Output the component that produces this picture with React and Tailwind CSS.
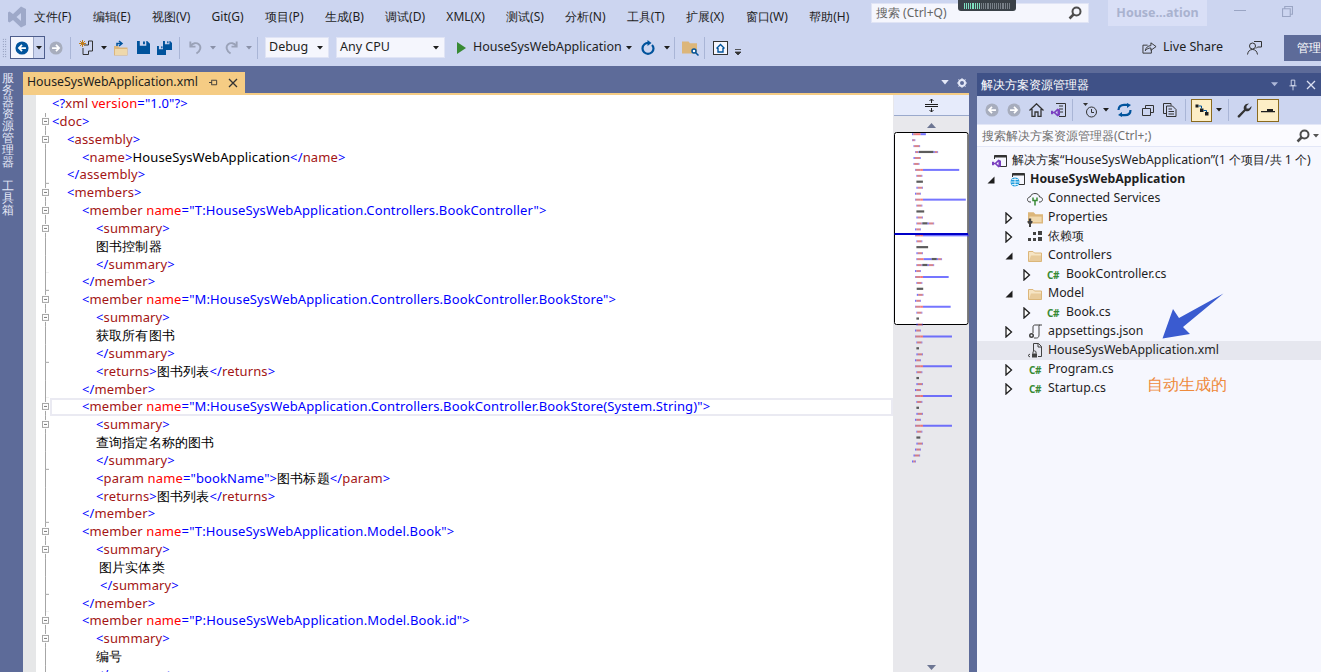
import React from 'react';

// xml token helpers, every line is a list of [kind, text]
const colors = {
  b: 'text-[#0000ff]',
  t: 'text-[#a31515]',
  a: 'text-[#ff0000]',
  k: 'text-black',
};

const open = (name, attr, val) =>
  attr
    ? [['b', '<'], ['t', name + ' '], ['a', attr], ['b', '="' + val + '">']]
    : [['b', '<'], ['t', name], ['b', '>']];
const close = (name) => [['b', '</'], ['t', name], ['b', '>']];
const txt = (s) => [['k', s]];

const pad = ['pl-0', 'pl-[15px]', 'pl-[30px]', 'pl-[44px]', 'pl-[47px]', 'pl-[48px]'];

const C = 'HouseSysWebApplication.Controllers.BookController';
const M = 'HouseSysWebApplication.Model.Book';

const lines = [
  { i: 0, f: null, p: [['b', '<?'], ['t', 'xml '], ['a', 'version'], ['b', '="1.0"?>']] },
  { i: 0, f: 'box', p: open('doc') },
  { i: 1, f: 'box', p: open('assembly') },
  { i: 2, f: 'line', p: [...open('name'), ...txt('HouseSysWebApplication'), ...close('name')] },
  { i: 1, f: 'end', p: close('assembly') },
  { i: 1, f: 'box', p: open('members') },
  { i: 2, f: 'box', p: open('member', 'name', 'T:' + C) },
  { i: 3, f: 'box', p: open('summary') },
  { i: 3, f: 'line', p: txt('图书控制器') },
  { i: 3, f: 'end', p: close('summary') },
  { i: 2, f: 'end', p: close('member') },
  { i: 2, f: 'box', p: open('member', 'name', 'M:' + C + '.BookStore') },
  { i: 3, f: 'box', p: open('summary') },
  { i: 3, f: 'line', p: txt('获取所有图书') },
  { i: 3, f: 'end', p: close('summary') },
  { i: 3, f: 'line', p: [...open('returns'), ...txt('图书列表'), ...close('returns')] },
  { i: 2, f: 'end', p: close('member') },
  { i: 2, f: 'box', hl: true, p: open('member', 'name', 'M:' + C + '.BookStore(System.String)') },
  { i: 3, f: 'box', p: open('summary') },
  { i: 3, f: 'line', p: txt('查询指定名称的图书') },
  { i: 3, f: 'end', p: close('summary') },
  { i: 3, f: 'line', p: [...open('param', 'name', 'bookName'), ...txt('图书标题'), ...close('param')] },
  { i: 3, f: 'line', p: [...open('returns'), ...txt('图书列表'), ...close('returns')] },
  { i: 2, f: 'end', p: close('member') },
  { i: 2, f: 'box', p: open('member', 'name', 'T:' + M) },
  { i: 3, f: 'box', p: open('summary') },
  { i: 4, f: 'line', p: txt('图片实体类') },
  { i: 5, f: 'end', p: close('summary') },
  { i: 2, f: 'end', p: close('member') },
  { i: 2, f: 'box', p: open('member', 'name', 'P:' + M + '.id') },
  { i: 3, f: 'box', p: open('summary') },
  { i: 3, f: 'line', p: txt('编号') },
  { i: 3, f: 'end', p: close('summary') },
];

// only the code map needs the rows below the fold
const prop = (tail, t) => [
  { i: 2, p: open('member', 'name', 'P:' + M + '.' + tail) },
  { i: 3, p: open('summary') },
  { i: 3, p: txt(t) },
  { i: 3, p: close('summary') },
  { i: 2, p: close('member') },
];
const mapLines = [
  ...lines,
  { i: 2, p: close('member') },
  ...prop('aaaa', '一二'),
  ...prop('bbbb', '一二'),
  ...prop('cccc', '一二'),
  ...prop('dddd', '一二三'),
  { i: 1, p: close('members') },
  { i: 0, p: close('doc') },
];

const mapFill = { b: '#3a3aff', t: '#c4505c', a: '#f04040', k: '#333333' };
const indentPx = [0, 15, 30, 44, 47, 48];

function CodeMap() {
  return (
    <svg viewBox="0 0 75 556" className="w-full flex-1 min-h-0" preserveAspectRatio="xMinYMin slice">
      <path d="M33 12 L37.5 7 L42 12 Z" fill="#6d7693" />
      <path d="M33 549 L37.5 554 L42 549 Z" fill="#6d7693" />
      <rect x="0.5" y="16.5" width="73.5" height="192" rx="2" fill="#fff" stroke="#000" />
      <g className="blur-[0.5px]">
        {mapLines.map((l, n) => {
          let x = 18 + indentPx[l.i] * 0.1;
          const y = 17.2 + n * 5.95;
          return l.p.map(([k, s], j) => {
            const cjk = k === 'k' && /[^\x00-\x7f]/.test(s);
            const w = s.length * (cjk ? 1.3 : 0.66);
            const r = <rect key={n + '-' + j} x={x} y={y - (k === 'k' ? 0.2 : 0)} width={w} height={k === 'k' ? 2.2 : 2} fill={mapFill[k]} opacity={k === 'k' ? 0.8 : 0.7} />;
            x += w;
            return r;
          });
        })}
      </g>
      <rect x="0.5" y="117" width="73.5" height="2" fill="#0000c8" />
    </svg>
  );
}

function Fold({ kind }) {
  if (!kind) return <div className="w-[16px] shrink-0" />;
  return (
    <svg viewBox="0 0 16 18" preserveAspectRatio="none" className="w-[16px] h-full shrink-0">
      {kind === 'box' ? (
        <>
          <path d="M9.5 0V4M9.5 13V18" stroke="#a5a5a5" fill="none" />
          <rect x="6.5" y="5.5" width="6" height="6" fill="#fff" stroke="#a5a5a5" />
          <path d="M8 8.5H11" stroke="#777" />
        </>
      ) : kind === 'end' ? (
        <path d="M9.5 0V18M9.5 17.5H13" stroke="#a5a5a5" fill="none" />
      ) : (
        <path d="M9.5 0V18" stroke="#a5a5a5" fill="none" />
      )}
    </svg>
  );
}

function CodeLine({ line }) {
  return (
    <div className={'flex h-[17.85px] items-center ' + (line.hl ? 'relative' : '')}>
      <Fold kind={line.f} />
      {line.hl && <div className="absolute left-[14px] right-0 top-0 bottom-0 border-2 border-[#eaeaf2]" />}
      <div className={'whitespace-pre text-[13px] tracking-[0.13px] leading-[17.85px] ' + pad[line.i]}>
        {line.p.map(([k, s], j) => (
          <span key={j} className={colors[k]}>{s}</span>
        ))}
      </div>
    </div>
  );
}

const Caret = ({ c = '#1e1e1e', className = '' }) => (
  <svg viewBox="0 0 6 4" className={'w-[6px] h-[4px] shrink-0 ' + className}><path d="M0 0H6L3 3.5Z" fill={c} /></svg>
);
const Sep = ({ className = '' }) => <div className={'w-[1px] h-[22px] bg-[#a9b5d6] shrink-0 ' + className} />;
const Slot = ({ className = '', children }) => (
  <div className={'flex items-center justify-center shrink-0 ' + className}>{children}</div>
);

const RoundArrow = ({ fill, dir = 'left', className = 'w-[14px] h-[14px]' }) => (
  <svg viewBox="0 0 16 16" className={className}>
    <circle cx="8" cy="8" r="7.5" fill={fill} />
    <path d={dir === 'left' ? 'M12.5 8H5M8 4.5L4.5 8L8 11.5' : 'M3.5 8H11M8 4.5L11.5 8L8 11.5'} stroke="#fff" strokeWidth="2" fill="none" />
  </svg>
);
const Save = ({ className = 'w-[13px] h-[13px]' }) => (
  <svg viewBox="0 0 14 14" className={className}>
    <path d="M0 0H3V5H10V0H11L14 3V14H0Z" fill="#00539c" />
    <rect x="6.5" y="0.5" width="2" height="3" fill="#00539c" />
  </svg>
);
const Undo = ({ flip }) => (
  <svg viewBox="0 0 16 16" className={'w-[15px] h-[15px] ' + (flip ? '-scale-x-100' : '')}>
    <path d="M2.5 1.5V7H8M3 6.5C5 3 9 2.5 11.5 4.5C14.5 7 13.5 11.5 9 14.5" stroke="#9aa2b8" strokeWidth="2" fill="none" />
  </svg>
);
const Folder = ({ className = 'w-[15px] h-[13px]', fill = '#dcb67a' }) => (
  <svg viewBox="0 0 16 13" className={className}>
    <path d="M0 1H6L8 3H16V13H0Z" fill={fill} />
    <path d="M1.5 5.5H14.5V11.5H1.5Z" fill="#f0d9ae" />
  </svg>
);
const VsMark = ({ className }) => (
  <svg viewBox="0 0 16 16" className={className}>
    <path d="M11.5 1L16 3V13L11.5 15L5 9L2 11.5L0 10.5V5.500L2 4.500L5 7ZM11.5 5L8 8L11.5 11Z" fill="#7a3fc0" fillRule="evenodd" />
  </svg>
);
const Csharp = () => (
  <span className="text-[#388a34] font-bold text-[10px] leading-none tracking-[-0.5px] font-['Liberation_Sans',sans-serif]">C#</span>
);
const ArrowOpen = () => (
  <svg viewBox="0 0 8 12" className="w-[8px] h-[12px] ml-[1px]"><path d="M1 1L6.500 6L1 11Z" fill="#fff" stroke="#1e1e1e" strokeWidth="1.300" /></svg>
);
const ArrowDown = () => (
  <svg viewBox="0 0 8 8" className="w-[8px] h-[8px] ml-[1px]"><path d="M7.500 0.500V7.500H0.500Z" fill="#1e1e1e" /></svg>
);

const FolderOpen = () => (
  <svg viewBox="0 0 14 12" className="w-[14px] h-[12px]">
    <path d="M0.500 1.500H5L6.500 3H13.500V11.500H0.500Z" fill="#f6e4c3" stroke="#dcb67a" />
    <path d="M1 11L3 5.500H13.500V11.500H1Z" fill="#dcb67a" opacity="0.55" />
  </svg>
);

const treeRows = [
  { d: 0, icon: 'sol', label: '解决方案“HouseSysWebApplication”(1 个项目/共 1 个)' },
  { d: 1, a: 'down', icon: 'web', label: 'HouseSysWebApplication', bold: true },
  { d: 2, icon: 'cloud', label: 'Connected Services' },
  { d: 2, a: 'open', icon: 'props', label: 'Properties' },
  { d: 2, a: 'open', icon: 'deps', label: '依赖项' },
  { d: 2, a: 'down', icon: 'folder', label: 'Controllers' },
  { d: 3, a: 'open', icon: 'cs', label: 'BookController.cs' },
  { d: 2, a: 'down', icon: 'folder', label: 'Model' },
  { d: 3, a: 'open', icon: 'cs', label: 'Book.cs' },
  { d: 2, a: 'open', icon: 'json', label: 'appsettings.json' },
  { d: 2, icon: 'xml', label: 'HouseSysWebApplication.xml', sel: true },
  { d: 2, a: 'open', icon: 'cs', label: 'Program.cs' },
  { d: 2, a: 'open', icon: 'cs', label: 'Startup.cs' },
];

const treePad = { 0: 'pl-[9px]', 1: 'pl-[9px]', 2: 'pl-[27px]', 3: 'pl-[45px]' };

function TreeIcon({ name }) {
  switch (name) {
    case 'sol':
      return (
        <div className="relative w-[15px] h-[14px]">
          <svg viewBox="0 0 15 14" className="w-[15px] h-[14px]">
            <path d="M2.500 5V1.500H14.500V12.500H7" stroke="#333" fill="none" />
            <path d="M2.500 1.500H14.500V3.500H2.500Z" fill="#333" />
          </svg>
          <VsMark className="absolute left-0 bottom-0 w-[9px] h-[9px]" />
        </div>
      );
    case 'web':
      return (
        <svg viewBox="0 0 15 15" className="w-[15px] h-[15px]">
          <path d="M2.500 5V1.500H14.500V12.500H9" stroke="#333" fill="none" />
          <path d="M2.500 1.500H14.500V3.500H2.500Z" fill="#333" />
          <circle cx="5" cy="10" r="4.500" fill="#1f9ee0" />
          <path d="M0.500 10H9.500M5 5.500V14.500M2 7.500H8M2 12.500H8" stroke="#fff" strokeWidth="0.800" fill="none" />
        </svg>
      );
    case 'cloud':
      return (
        <svg viewBox="0 0 16 14" className="w-[16px] h-[14px]">
          <path d="M4 10H3C1 10 0.500 8.500 0.500 7.500C0.500 6 2 5 3 5C4 2.500 6 1.500 8 1.500C11 1.500 12.500 3.500 12.500 5C14.500 5 15.500 6.500 15.500 7.500C15.500 9 14 10 13 10H12" stroke="#424242" fill="none" />
          <path d="M6 5.500V8.500H10V5.500M8 8.500V13.500" stroke="#388a34" strokeWidth="1.500" fill="none" />
        </svg>
      );
    case 'props':
      return (
        <div className="relative w-[15px] h-[13px]">
          <Folder className="w-[15px] h-[13px]" />
          <svg viewBox="0 0 6 9" className="absolute left-[-1px] bottom-[-3px] w-[6px] h-[9px]">
            <path d="M0.500 0.500V3H1.800V0.500H4.200V3H5.500V0.500V4.500L4 6V9H2V6L0.500 4.500Z" fill="#424242" />
          </svg>
        </div>
      );
    case 'deps':
      return (
        <svg viewBox="0 0 14 11" className="w-[14px] h-[11px]">
          <path d="M0 7H3V10H0ZM5 7H8V10H5ZM5 1H8V4H5Z" fill="#424242" />
          <path d="M10 0H14V4H10Z" fill="#424242" />
          <path d="M10 6H14V10H10Z" fill="#424242" />
        </svg>
      );
    case 'folder':
      return <FolderOpen />;
    case 'cs':
      return <Csharp />;
    case 'json':
      return (
        <svg viewBox="0 0 15 15" className="w-[15px] h-[15px]">
          <path d="M5 9V3C5 1.500 6 1 7 1H14M12 1C10.500 1 11 3 11 4V11C11 13 10 14 8.500 14H6" stroke="#424242" fill="none" />
          <circle cx="3.500" cy="11.500" r="2.500" fill="#424242" />
          <circle cx="3.500" cy="11.500" r="1" fill="#f6f7fe" />
        </svg>
      );
    case 'xml':
      return (
        <svg viewBox="0 0 16 15" className="w-[16px] h-[15px]">
          <path d="M6.500 8V0.500H11.500L14.500 3.500V13.500H11" stroke="#424242" fill="none" />
          <path d="M11 0.500V4H14.500" stroke="#424242" fill="none" />
          <rect x="5" y="10.500" width="5" height="4" fill="#424242" />
          <path d="M6 10.500V9C6 7.500 9 7.500 9 9V10.500" stroke="#424242" fill="none" />
          <path d="M3 11L1 12.500L3 14M12 11" stroke="#424242" fill="none" />
        </svg>
      );
    default:
      return null;
  }
}

function TreeRow({ row }) {
  return (
    <div className={'flex items-center h-[19px] whitespace-nowrap ' + treePad[row.d] + (row.sel ? ' bg-[#e6e7ef]' : '')}>
      {row.d > 0 && (
        <div className="w-[18px] flex items-center shrink-0">
          {row.a === 'down' && <ArrowDown />}
          {row.a === 'open' && <ArrowOpen />}
        </div>
      )}
      <div className="flex items-center justify-center shrink-0 w-[26px]">
        <TreeIcon name={row.icon} />
      </div>
      <span className={'text-[12.3px] text-[#1e1e1e] ' + (row.bold ? 'font-bold' : '')}>{row.label}</span>
    </div>
  );
}

const menus = ['文件(F)', '编辑(E)', '视图(V)', 'Git(G)', '项目(P)', '生成(B)', '调试(D)', 'XML(X)', '测试(S)', '分析(N)', '工具(T)', '扩展(X)', '窗口(W)', '帮助(H)'];

function SearchGlass({ className = 'w-[14px] h-[14px]' }) {
  return (
    <svg viewBox="0 0 14 14" className={className}>
      <circle cx="8.500" cy="5.500" r="4" stroke="#4d4d4d" strokeWidth="2" fill="none" />
      <path d="M5.500 8.500L1.500 12.500" stroke="#4d4d4d" strokeWidth="2.500" />
    </svg>
  );
}

export default function App() {
  return (
    <div className="relative h-[672px] w-[1321px] overflow-hidden flex flex-col bg-[#ccd5f0] font-['Noto_Sans','Noto_Sans_CJK_SC',sans-serif]">
      {/* title bar */}
      <div className="flex items-center h-[33px] shrink-0">
        <div className="w-[871px] flex items-center shrink-0">
          <Slot className="w-[34px]">
            <svg viewBox="0 0 18 22" className="w-[18px] h-[22px]">
              <path d="M13 0.500L18 3V19L13 21.500L5 14L1.500 16.500L0 15.500V6.500L1.500 5.500L5 8ZM13 7L8.500 11L13 15Z" fill="#9ea9c9" fillRule="evenodd" />
            </svg>
          </Slot>
          <div className="flex items-center gap-[21.3px] text-[12px] text-[#1e1e1e] whitespace-nowrap">
            {menus.map((m) => (
              <span key={m}>{m}</span>
            ))}
          </div>
        </div>
        <div className="w-[218px] h-[20px] mb-[7px] bg-[#f5f6fd] border border-[#e0e4f5] flex items-center justify-between pl-[4px] pr-[6px] text-[12px] text-[#666] shrink-0">
          <span>搜索 (Ctrl+Q)</span>
          <SearchGlass />
        </div>
        <div className="ml-[19px] mb-[7px] w-[99px] h-[26px] bg-[#d9dff6] flex items-center justify-center text-[12.500px] font-bold text-[#a9b2cf] shrink-0">House...ation</div>
        <div className="ml-[27px] mb-[12px] w-[12px] h-[1px] bg-[#9aa5c4] shrink-0" />
        <svg viewBox="0 0 10 10" className="ml-[36px] mb-[10px] w-[11px] h-[11px] shrink-0">
          <path d="M0.500 2.500H7.500V9.500H0.500ZM2.500 2.500V0.500H9.500V7.500H7.500" stroke="#9aa5c4" fill="none" />
        </svg>
      </div>

      {/* the little progress widget that hangs from the top edge */}
      <div className="absolute left-[958px] top-0 w-[58px] h-[11px] bg-[#3a4148] rounded-b-[3px] flex items-center gap-[1px] px-[6px]">
        {Array.from({ length: 25 }).map((_, n) => (
          <div key={n} className={'w-[1px] h-[6px] ' + (n < 9 ? 'bg-[#7ee0c0]' : 'bg-[#788088]')} />
        ))}
      </div>

      {/* toolbar */}
      <div className="flex items-center h-[33px] shrink-0 pl-[2px] pb-[4px]">
        <div className="w-[5px] h-[20px] shrink-0 bg-[radial-gradient(#6f7a9c_0.7px,transparent_0.8px)] bg-[length:2.500px_2.500px]" />
        <div className="ml-[3px] flex items-center w-[35px] h-[23px] border border-[#4d5d8c] shrink-0">
          <Slot className="w-[23px] h-full bg-[#f5f6fd] border-r border-[#9aa5c4]">
            <RoundArrow fill="#00539c" />
          </Slot>
          <Slot className="flex-1"><Caret /></Slot>
        </div>
        <Slot className="w-[22px]"><RoundArrow fill="#a7adbd" dir="right" /></Slot>
        <Sep className="ml-[3px]" />
        <Slot className="w-[30px]">
          <svg viewBox="0 0 14 15" className="w-[14px] h-[15px]">
            <path d="M5 5H9.500V1H13.500V11H9.500V14.500H4V8" stroke="#333" fill="none" />
            <path d="M3.500 0V7M0 3.500H7M1 1L6 6M6 1L1 6" stroke="#c27d1a" />
          </svg>
        </Slot>
        <Slot className="w-[6px]"><Caret /></Slot>
        <Slot className="w-[26px]">
          <svg viewBox="0 0 15 16" className="w-[15px] h-[16px]">
            <path d="M1 6H5L6.500 7.500H14.500V15.500H1Z" fill="#dcb67a" />
            <path d="M2 9H14V15H2Z" fill="#eed8ab" />
            <path d="M4 6V3.500H8M6 1L9 3.500L6 6" stroke="#00539c" strokeWidth="1.500" fill="none" />
          </svg>
        </Slot>
        <Slot className="w-[20px]"><Save /></Slot>
        <Slot className="w-[22px]">
          <div className="relative w-[15px] h-[14px]">
            <Save className="absolute right-0 top-0 w-[9px] h-[9px]" />
            <Save className="absolute left-0 bottom-0 w-[9px] h-[9px]" />
          </div>
        </Slot>
        <Sep className="ml-[4px]" />
        <Slot className="w-[30px]"><Undo /></Slot>
        <Slot className="w-[6px]"><Caret c="#8a91a8" /></Slot>
        <Slot className="w-[30px]"><Undo flip /></Slot>
        <Slot className="w-[6px]"><Caret c="#8a91a8" /></Slot>
        <Sep className="ml-[5px]" />
        <div className="ml-[7px] w-[64px] h-[21px] bg-[#f5f6fd] border border-[#e0e4f5] flex items-center justify-between pl-[3px] pr-[5px] text-[12.500px] text-[#1e1e1e] shrink-0">
          <span>Debug</span>
          <Caret />
        </div>
        <div className="ml-[7px] w-[109px] h-[21px] bg-[#f5f6fd] border border-[#e0e4f5] flex items-center justify-between pl-[3px] pr-[5px] text-[12.500px] text-[#1e1e1e] shrink-0">
          <span>Any CPU</span>
          <Caret />
        </div>
        <Slot className="ml-[7px] w-[18px]">
          <svg viewBox="0 0 9 12" className="w-[9px] h-[12px]"><path d="M0 0L9 6L0 12Z" fill="#388a34" /></svg>
        </Slot>
        <span className="ml-[3px] w-[148px] text-[12.500px] text-[#1e1e1e] whitespace-nowrap shrink-0">HouseSysWebApplication</span>
        <Slot className="ml-[5px] w-[6px]"><Caret /></Slot>
        <Slot className="w-[32px]">
          <svg viewBox="0 0 14 15" className="w-[14px] h-[15px]">
            <path d="M8 3C4.500 2.500 1.500 5 1.500 8.500C1.500 11.500 4 13.800 7 13.800C10 13.800 12.500 11.500 12.500 8.500C12.500 7 12 6 11 5" stroke="#00539c" strokeWidth="2.200" fill="none" />
            <path d="M6.500 0L10.500 3L6.500 6Z" fill="#00539c" />
          </svg>
        </Slot>
        <Slot className="w-[6px]"><Caret /></Slot>
        <Sep className="ml-[4px]" />
        <Slot className="w-[29px]">
          <div className="relative w-[15px] h-[13px]">
            <svg viewBox="0 0 16 13" className="w-[15px] h-[13px]"><path d="M0 0H7L8.500 2H16V13H0Z" fill="#dcb67a" /></svg>
            <svg viewBox="0 0 8 8" className="absolute right-[-2px] bottom-[-2px] w-[8px] h-[8px]">
              <circle cx="3" cy="3" r="2" stroke="#00539c" strokeWidth="1.500" fill="#fff" />
              <path d="M4.500 4.500L7.500 7.500" stroke="#00539c" strokeWidth="1.500" />
            </svg>
          </div>
        </Slot>
        <Sep />
        <Slot className="w-[30px]">
          <svg viewBox="0 0 15 14" className="w-[15px] h-[14px]">
            <rect x="0.500" y="0.500" width="14" height="13" fill="#f5f6fd" stroke="#333" />
            <path d="M3.500 7.500L7.500 3.500L11.500 7.500M5 7V11H10V7" stroke="#00539c" strokeWidth="1.400" fill="none" />
          </svg>
        </Slot>
        <svg viewBox="0 0 6 6" className="w-[6px] h-[6px] mt-[9px] shrink-0"><path d="M0 0.500H6M0 3H6L3 6Z" stroke="#333" strokeWidth="0.800" fill="#333" /></svg>
        <div className="flex-1" />
        <svg viewBox="0 0 16 15" className="w-[15px] h-[15px] shrink-0">
          <path d="M10 8V13.500H1V5H6" stroke="#333" fill="none" />
          <path d="M3.500 11C4 7.500 6.500 5.500 9.500 5.500V2.500L15 6.500L9.500 10.500V8C7 8 5 9 3.500 11Z" fill="#ccd5f0" stroke="#333" />
        </svg>
        <span className="ml-[6px] text-[12.500px] text-[#1e1e1e] whitespace-nowrap w-[60px] shrink-0">Live Share</span>
        <svg viewBox="0 0 15 15" className="ml-[24px] w-[15px] h-[15px] shrink-0">
          <circle cx="5.500" cy="6" r="3" stroke="#333" fill="none" />
          <path d="M0.500 14.500C1 11 3 9.500 5.500 9.500C8 9.500 10 11 10.500 14.500M7 1.500H14.500V7H10.500L9 8.500" stroke="#333" fill="none" />
        </svg>
        <div className="ml-[22px] w-[37px] h-[26px] bg-[#5d6b99] text-white text-[12px] flex items-center pl-[13px] whitespace-nowrap overflow-hidden shrink-0">管理员</div>
      </div>

      {/* body */}
      <div className="flex flex-1 min-h-0 bg-[#5d6b99]">
        <div className="w-[23px] shrink-0 pt-[6px] pl-[2px] flex flex-col gap-[12px] text-[12px] text-[#e4e8f7]">
          <span className="w-[12px] leading-[12px] break-all">服务器资源管理器</span>
          <span className="w-[12px] leading-[12px] break-all">工具箱</span>
        </div>

        <div className="w-[946px] shrink-0 flex flex-col min-h-0">
          <div className="flex items-end h-[27px] shrink-0">
            <div className="w-[222px] h-[21px] bg-[#f5cc84] flex items-center pl-[4px] shrink-0">
              <span className="text-[12.3px] text-[#1e1e1e] whitespace-nowrap">HouseSysWebApplication.xml</span>
              <svg viewBox="0 0 10 10" className="ml-[11px] w-[9px] h-[9px] shrink-0">
                <path d="M0 5H3M3 2V8M3.500 2.500H8.500V7.500H3.500" stroke="#333" fill="none" />
              </svg>
              <svg viewBox="0 0 10 10" className="ml-[10px] w-[10px] h-[10px] shrink-0">
                <path d="M1 1L9 9M9 1L1 9" stroke="#333" strokeWidth="1.300" />
              </svg>
            </div>
            <div className="flex-1 flex items-center justify-end h-[21px] pr-[2px] gap-[8px]">
              <Caret c="#e4e8f7" className="w-[8px] h-[5px]" />
              <svg viewBox="0 0 10 10" className="w-[10px] h-[10px]">
                <circle cx="5" cy="5" r="3" stroke="#e4e8f7" strokeWidth="2" fill="none" />
                <path d="M5 0V2M5 8V10M0 5H2M8 5H10M1.500 1.500L3 3M7 7L8.500 8.500M8.500 1.500L7 3M3 7L1.500 8.500" stroke="#e4e8f7" />
              </svg>
            </div>
          </div>
          <div className="h-[2px] bg-[#f5cc84] shrink-0" />
          <div className="flex flex-1 min-h-0">
            <div className="w-[13px] bg-[#e6e7e8] shrink-0" />
            <div className="w-[857px] bg-white shrink-0 overflow-hidden">
              {lines.map((l, n) => (
                <CodeLine key={n} line={l} />
              ))}
            </div>
            <div className="flex-1 flex flex-col min-h-0 bg-[#e8e8ec] border-l border-[#e8e8ec]">
              <div className="h-[21px] bg-[#e6ebfb] border-b border-[#9aa9cc] flex items-center justify-center shrink-0">
                <svg viewBox="0 0 13 13" className="w-[13px] h-[13px]">
                  <path d="M0 5.500H13M0 7.500H13M6.500 0V4M6.500 9V13" stroke="#1e1e1e" />
                  <path d="M4.500 2L6.500 0L8.500 2M4.500 11L6.500 13L8.500 11" stroke="#1e1e1e" fill="none" />
                </svg>
              </div>
              <CodeMap />
            </div>
          </div>
        </div>

        {/* solution explorer */}
        <div className="ml-[8px] flex-1 min-w-0 mt-[7px] flex flex-col min-h-0">
          <div className="h-[23px] bg-[#3f5187] flex items-center pl-[4px] pr-[5px] shrink-0">
            <span className="text-[12px] text-white flex-1">解决方案资源管理器</span>
            <Caret c="#aeb8d8" className="w-[7px] h-[5px] mr-[11px]" />
            <svg viewBox="0 0 9 12" className="w-[8px] h-[12px] mr-[9px]">
              <path d="M2.500 0.500H6.500V6.500H2.500ZM0.500 7H8.500M4.500 7V12" stroke="#dbe0f2" fill="none" />
            </svg>
            <svg viewBox="0 0 10 10" className="w-[10px] h-[10px]">
              <path d="M1 1L9 9M9 1L1 9" stroke="#dbe0f2" strokeWidth="1.300" />
            </svg>
          </div>
          <div className="h-[28px] bg-[#ccd5f0] flex items-center pl-[4px] shrink-0">
            <Slot className="w-[22px]"><RoundArrow fill="#a7adbd" /></Slot>
            <Slot className="w-[22px]"><RoundArrow fill="#a7adbd" dir="right" /></Slot>
            <Slot className="w-[22px]">
              <svg viewBox="0 0 15 14" className="w-[15px] h-[14px]">
                <path d="M0.500 7.500L7.500 0.800L14.500 7.500M3 6V13.500H6V9H9V13.500H12V6" stroke="#333" strokeWidth="1.300" fill="none" />
              </svg>
            </Slot>
            <Slot className="w-[22px]">
              <div className="relative w-[15px] h-[14px]">
                <svg viewBox="0 0 15 14" className="w-[15px] h-[14px]">
                  <path d="M5 0.500H14.500V13.500H8M8 3H12M8 6H12M8 9H12" stroke="#333" fill="none" />
                </svg>
                <VsMark className="absolute left-0 bottom-0 w-[9px] h-[9px]" />
              </div>
            </Slot>
            <Sep className="ml-[3px]" />
            <Slot className="w-[24px] ml-[5px]">
              <svg viewBox="0 0 15 15" className="w-[15px] h-[15px]">
                <path d="M0 0H5L2.500 3Z" fill="#333" />
                <circle cx="8.500" cy="9" r="5" stroke="#333" fill="none" />
                <path d="M8.500 6V9.500H11" stroke="#333" fill="none" />
              </svg>
            </Slot>
            <Slot className="w-[8px]"><Caret /></Slot>
            <Slot className="w-[26px] ml-[1px]">
              <svg viewBox="0 0 15 14" className="w-[15px] h-[14px]">
                <path d="M1.500 7C1.500 3.500 4 1.800 7 1.800H10.500M13.500 7C13.500 10.500 11 12.200 8 12.200H4.500" stroke="#00539c" strokeWidth="2.200" fill="none" />
                <path d="M10 0L14 2L10 5ZM5 9L1 12L5 14Z" fill="#00539c" />
              </svg>
            </Slot>
            <Slot className="w-[22px]">
              <svg viewBox="0 0 12 12" className="w-[12px] h-[12px]">
                <path d="M0.500 4.500H8.500V11.500H0.500ZM3.500 4V1.500H11.500V8.500H9" stroke="#333" fill="none" />
              </svg>
            </Slot>
            <Slot className="w-[22px]">
              <svg viewBox="0 0 14 14" className="w-[14px] h-[14px]">
                <path d="M3 10.500H0.500V0.500H8V2.500M3.500 3H9.500L13 6.500V13.500H3.500ZM5.500 6H9M5.500 8.500H11M5.500 11H11" stroke="#333" fill="none" />
              </svg>
            </Slot>
            <Sep className="ml-[4px]" />
            <div className="ml-[5px] w-[21px] h-[23px] bg-[#fdeec6] border border-[#8a6a1e] flex items-center justify-center shrink-0">
              <svg viewBox="0 0 14 12" className="w-[14px] h-[12px]">
                <path d="M0.500 0.500H3.500V3.500H0.500ZM5 4.500H8.500V8H5ZM10 8H13.500V11.500H10Z" fill="#1e1e1e" />
                <path d="M3.500 2H6.500V4.500M8.500 6.500H11.500V8" stroke="#00539c" fill="none" />
              </svg>
            </div>
            <Slot className="w-[14px]"><Caret /></Slot>
            <Sep className="ml-[2px]" />
            <Slot className="w-[26px] ml-[2px]">
              <svg viewBox="0 0 15 15" className="w-[15px] h-[15px]">
                <path d="M1 14.500L0.500 13L7 6.500C6 3.500 8 0.500 12 0.500L9.500 3V5.500H12L14.500 3C14.500 7 11.500 9 8.500 8L2.500 14.500Z" fill="#333" />
              </svg>
            </Slot>
            <div className="w-[22px] h-[23px] bg-[#fdeec6] border border-[#8a6a1e] flex items-center justify-center shrink-0">
              <svg viewBox="0 0 14 6" className="w-[14px] h-[6px]"><path d="M0 4H14V5.200H0ZM6 2H12V4H6Z" fill="#1e1e1e" /></svg>
            </div>
          </div>
          <div className="h-[23px] bg-[#fbfbff] border-b border-t border-[#e3e7f7] flex items-center pl-[5px] pr-[2px] shrink-0">
            <span className="flex-1 text-[12px] text-[#717171] whitespace-nowrap">搜索解决方案资源管理器(Ctrl+;)</span>
            <SearchGlass />
            <Caret c="#555" className="ml-[3px]" />
          </div>
          <div className="relative flex-1 min-h-0 bg-[#f6f7fe] pt-[4px]">
            {treeRows.map((r) => (
              <TreeRow key={r.label} row={r} />
            ))}
            <svg viewBox="0 0 62 46" className="absolute left-[185px] top-[146px] w-[62px] h-[46px]">
              <path d="M0.500 45.500L11 16L17 25L61.500 0.500L21 34L28 41Z" fill="#3a5bd0" />
            </svg>
            <span className="absolute left-[170px] top-[227px] text-[15.8px] leading-[20px] text-[#ee8a3c]">自动生成的</span>
          </div>
        </div>
      </div>
    </div>
  );
}
